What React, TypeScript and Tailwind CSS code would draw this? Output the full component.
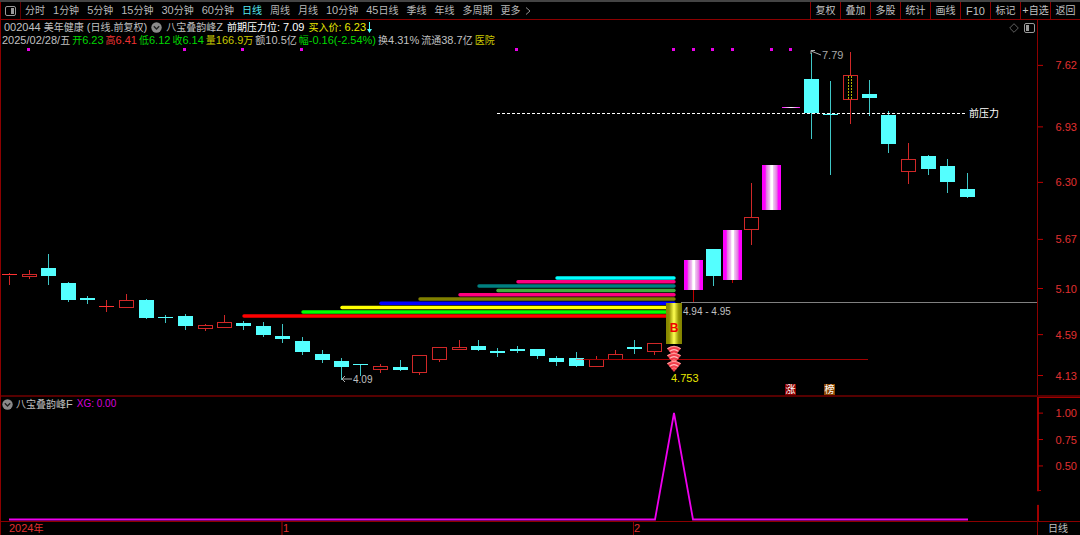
import React, { useState } from "react";

const FONT = "font-['Liberation_Sans','Noto_Sans_CJK_SC',sans-serif]";

const periods = [
  "分时", "1分钟", "5分钟", "15分钟", "30分钟", "60分钟", "日线", "周线",
  "月线", "10分钟", "45日线", "季线", "年线", "多周期",
];

const tools = ["复权", "叠加", "多股", "统计", "画线", "F10", "标记", "+自选", "返回"];

type Kind = "up" | "down" | "flatUp";

// x centre, body top, body bottom, wick top, wick bottom, kind
const candles: [number, number, number, number, number, Kind][] = [
  [9, 274, 276, 273, 285, "flatUp"],
  [29, 274, 276, 270, 279, "up"],
  [48, 268, 276, 254, 285, "down"],
  [68, 283, 300, 282, 302, "down"],
  [87, 298, 300, 296, 304, "down"],
  [106, 306, 307, 300, 312, "flatUp"],
  [126, 300, 307, 294, 307, "up"],
  [146, 300, 318, 299, 319, "down"],
  [165, 317, 318, 315, 323, "down"],
  [185, 316, 326, 314, 330, "down"],
  [205, 325, 328, 324, 331, "up"],
  [224, 322, 327, 315, 328, "up"],
  [243, 323, 326, 321, 330, "down"],
  [263, 326, 335, 322, 337, "down"],
  [282, 336, 339, 324, 343, "down"],
  [302, 341, 352, 337, 355, "down"],
  [322, 354, 360, 350, 363, "down"],
  [341, 361, 367, 358, 380, "down"],
  [360, 364, 365, 364, 376, "down"],
  [380, 366, 369, 364, 373, "up"],
  [400, 367, 370, 360, 371, "down"],
  [419, 355, 372, 355, 375, "up"],
  [439, 347, 359, 347, 362, "up"],
  [459, 347, 349, 340, 350, "up"],
  [478, 346, 350, 340, 351, "down"],
  [497, 351, 353, 348, 357, "down"],
  [517, 349, 351, 346, 353, "down"],
  [537, 349, 356, 349, 359, "down"],
  [556, 358, 362, 356, 366, "down"],
  [576, 358, 366, 352, 367, "down"],
  [596, 359, 366, 356, 366, "up"],
  [615, 354, 359, 350, 359, "up"],
  [634, 347, 349, 340, 354, "down"],
  [654, 343, 351, 343, 355, "up"],
  [713, 249, 276, 249, 286, "down"],
  [751, 217, 229, 183, 245, "up"],
  [811, 79, 113, 53, 139, "down"],
  [830, 114, 115, 81, 175, "down"],
  [850, 75, 99, 52, 124, "up"],
  [869, 94, 98, 80, 116, "down"],
  [888, 115, 144, 111, 153, "down"],
  [908, 159, 171, 143, 184, "up"],
  [928, 156, 169, 155, 175, "down"],
  [947, 166, 182, 159, 193, "down"],
  [967, 189, 197, 173, 198, "down"],
];

const peaks: [number, number, string][] = [
  [242, 316, "#ff0000"],
  [301, 312, "#00ff00"],
  [340, 307.5, "#ffff00"],
  [379, 303.2, "#0000ff"],
  [418, 299, "#808000"],
  [458, 294.8, "#ff0080"],
  [496, 290.5, "#40b040"],
  [477, 286, "#008080"],
  [516, 281.8, "#ff0080"],
  [555, 278, "#00ffff"],
];

const magentaBars: [number, number, number][] = [
  [684, 260, 290],
  [723, 230, 280],
  [762, 165, 210],
];

const signalDots = [28, 184, 242, 301, 516, 673, 693, 712, 732, 771, 790];

// Latin runs are set one size larger than the Chinese glyphs beside them.
function Label({ children }: { children: string }) {
  const runs = children.match(/[\u4e00-\u9fff]+|[^\u4e00-\u9fff]+/g) ?? [];
  return (
    <>
      {runs.map((run, i) => (
        <span key={i} className={/[\u4e00-\u9fff]/.test(run) ? "text-[10px]" : "text-[11px]"}>
          {run}
        </span>
      ))}
    </>
  );
}

function Candle({ c }: { c: [number, number, number, number, number, Kind] }) {
  const [x, top, bottom, high, low, kind] = c;
  if (kind === "down") {
    return (
      <g>
        <rect x={x} y={high} width="1" height={low - high} fill="#3fc6c6" />
        <rect x={x - 7} y={top} width="15" height={bottom - top} fill="#54ffff" />
      </g>
    );
  }
  return (
    <g>
      <rect x={x} y={high} width="1" height={top - high} fill="#d02828" />
      <rect x={x} y={bottom} width="1" height={Math.max(0, low - bottom)} fill="#d02828" />
      {kind === "up" ? (
        <rect x={x - 6.5} y={top + 0.5} width="14" height={bottom - top} fill="none" stroke="#d02828" />
      ) : (
        <rect x={x - 7} y={top} width="15" height="1" fill="#ff3232" />
      )}
    </g>
  );
}

function Gem({ y }: { y: number }) {
  return (
    <g transform={`translate(674 ${y})`}>
      <path d="M-7 2.6Q0 -2.6 7 2.6L0 11Z" fill="#f03c4a" />
      <path d="M-6.6 2.8Q0 -2 6.6 2.8" fill="none" stroke="#ff9a9a" strokeWidth="1.4" />
      <path d="M-4.4 5.4Q0 1.8 4.4 5.4" fill="none" stroke="#ffc0c0" strokeWidth="1.1" />
      <path d="M-2.4 7.8Q0 5.8 2.4 7.8" fill="none" stroke="#ff8080" />
    </g>
  );
}

function PriceChart() {
  return (
    <svg viewBox="1 45 1036 350" className="block w-full" role="img" aria-label="日线">
      <defs>
        <linearGradient id="magenta">
          <stop offset="0" stopColor="#ff00ff" />
          <stop offset="0.17" stopColor="#ff00ff" />
          <stop offset="0.22" stopColor="#e070e0" />
          <stop offset="0.42" stopColor="#f0c8f0" />
          <stop offset="0.46" stopColor="#ffffff" />
          <stop offset="0.56" stopColor="#ffffff" />
          <stop offset="0.6" stopColor="#f0c8f0" />
          <stop offset="0.8" stopColor="#e070e0" />
          <stop offset="0.84" stopColor="#ff00ff" />
          <stop offset="1" stopColor="#ff00ff" />
        </linearGradient>
        <linearGradient id="gold">
          <stop offset="0" stopColor="#858500" />
          <stop offset="0.2" stopColor="#909000" />
          <stop offset="0.5" stopColor="#ffff50" />
          <stop offset="0.8" stopColor="#909000" />
          <stop offset="1" stopColor="#808000" />
        </linearGradient>
        <linearGradient id="thin">
          <stop offset="0" stopColor="#ff00ff" />
          <stop offset="0.5" stopColor="#ffffff" />
          <stop offset="1" stopColor="#ff00ff" />
        </linearGradient>
      </defs>

      {signalDots.map((x) => (
        <rect key={x} x={x - 1} y="48" width="3" height="3" fill="#e800e8" />
      ))}

      {peaks.map(([x, y, color]) => (
        <line key={y} x1={x + 2} x2="674" y1={y} y2={y} stroke={color} strokeWidth="3.4" strokeLinecap="round" />
      ))}

      {candles.map((c) => (
        <Candle key={c[0]} c={c} />
      ))}

      <path d="M848.5 76V99M851.5 76V99" stroke="#b0b000" strokeDasharray="2 1" />
      <path d="M583 359.5H868" stroke="#a00000" />
      <path d="M576 359.5H583" stroke="#d09090" />
      <path d="M681 302.5H1037" stroke="#808080" />
      <path d="M497 113.5H967" stroke="#ffffff" strokeDasharray="3 2" />
      <rect x="782" y="107" width="18" height="1" fill="url(#thin)" />

      <path d="M693.5 290V302M732.5 280V283" stroke="#c00000" />
      {magentaBars.map(([x, top, bottom]) => (
        <rect key={x} x={x} y={top} width="19" height={bottom - top} fill="url(#magenta)" />
      ))}

      <rect x="666" y="303" width="16" height="41" fill="url(#gold)" />
      <Gem y={346} />
      <Gem y={353} />
      <Gem y={361} />

      <path d="M342 379H352M345 376L342 379L345 382" fill="none" stroke="#b0b0b0" />
      <path d="M811 51L821 55M811 54V50.5H815" fill="none" stroke="#b0b0b0" />

      <g fontSize="10" className={FONT}>
        <text x="674" y="332" fontSize="12" fontWeight="700" textAnchor="middle" fill="#f00000">B</text>
        <text x="353" y="383" fill="#c0c0c0">4.09</text>
        <text x="822" y="59" fontSize="11" fill="#a8a8a8">7.79</text>
        <text x="683" y="315" fill="#c0c0c0">4.94 - 4.95</text>
        <text x="671" y="382" fontSize="11" fill="#e8e800">4.753</text>
        <text x="969" y="117" fill="#ffffff">前压力</text>
        <rect x="785" y="384" width="11" height="11" fill="#8c0000" />
        <text x="790.5" y="393" textAnchor="middle" fill="#ffffff">涨</text>
        <rect x="824" y="384" width="11" height="11" fill="#8a4600" />
        <text x="829.5" y="393" textAnchor="middle" fill="#ffffff">榜</text>
      </g>
    </svg>
  );
}

const priceTicks: [string, string][] = [
  ["7.62", "12.1%"], ["6.93", "28.5%"], ["6.30", "43.3%"], ["5.67", "58.5%"],
  ["5.10", "71.6%"], ["4.59", "83.9%"], ["4.13", "94.8%"],
];

const signalTicks: [string, string][] = [["1.00", "13%"], ["0.75", "34.3%"], ["0.50", "55.6%"]];

function AxisLabels({ ticks }: { ticks: [string, string][] }) {
  return (
    <g className={FONT} fontSize="11">
      {ticks.map(([label, y]) => (
        <g key={label}>
          <line x1="0" x2="5" y1={y} y2={y} stroke="#c00000" />
          <text x="39" y={y} dy="4" textAnchor="end" fill="#e03030">{label}</text>
        </g>
      ))}
    </g>
  );
}

function Collapse() {
  return (
    <button type="button" aria-label="展开" className="shrink-0">
      <svg viewBox="0 0 11 11" className="block size-[11px]">
        <circle cx="5.5" cy="5.5" r="5.2" fill="#8a8a8a" />
        <path d="M2.8 4.3L5.5 7L8.2 4.3" fill="none" stroke="#202020" strokeWidth="1.4" />
      </svg>
    </button>
  );
}

function PanelIcon({ side }: { side: "left" | "right" }) {
  return (
    <svg viewBox="0 0 11 10" className="block h-[10px] w-[11px]">
      <rect x="0.5" y="0.5" width="10" height="9" rx="1.5" fill="none" stroke="#9a9a9a" />
      <rect x={side === "left" ? 2 : 6} y="2" width="3" height="6" fill="#9a9a9a" />
    </svg>
  );
}

export default function App() {
  const [period, setPeriod] = useState("日线");

  return (
    <div className={`${FONT} bg-black text-[11px] leading-3 text-[#c0c0c0]`}>
      <header className="flex h-5 items-stretch justify-between border-t-2 border-b border-t-[#444444] border-b-[#8c0000]">
        <nav className="flex items-center gap-1 whitespace-nowrap">
          <button
            type="button"
            aria-label="侧栏"
            className="flex h-full w-[21px] items-center justify-center border-x border-l-[#8c0000] border-r-[#600000]"
          >
            <PanelIcon side="right" />
          </button>
          <div className="flex items-center gap-2">
            {periods.map((p) => (
              <button
                key={p}
                type="button"
                onClick={() => setPeriod(p)}
                className={p === period ? "text-[#54e8f0]" : "text-[#b8b8b8]"}
              >
                <Label>{p}</Label>
              </button>
            ))}
            <button type="button" className="flex items-center gap-1 text-[#b8b8b8]">
              <Label>更多</Label>
              <svg viewBox="0 0 6 8" className="h-2 w-[6px]">
                <path d="M1 0.5L5 4L1 7.5" fill="none" stroke="#909090" />
              </svg>
            </button>
          </div>
        </nav>
        <div className="flex">
          {tools.map((t) => (
            <button
              key={t}
              type="button"
              className="w-[30px] border-l border-[#8c0000] text-center whitespace-nowrap text-[#c0c0c0]"
            >
              <Label>{t}</Label>
            </button>
          ))}
        </div>
      </header>

      <main className="border-l border-[#8c0000]">
        <section className="flex border-b-2 border-[#560000]">
          <div className="min-w-0 flex-1 border-r border-[#8c0000]">
            <div className="flex h-[25px] justify-between pt-px">
              <div className="whitespace-nowrap">
                <div className="flex items-center gap-1 pl-[3px]">
                  <span><Label>002044 美年健康 (日线.前复权)</Label></span>
                  <Collapse />
                  <span><Label>八宝叠韵峰Z</Label></span>
                  <span className="text-white"><Label>前期压力位: 7.09</Label></span>
                  <span className="flex items-center gap-px text-[#e8e800]">
                    <span><Label>买入价: 6.23</Label></span>
                    <svg viewBox="0 0 5 11" className="h-[11px] w-[5px]">
                      <path d="M2.5 0V8" stroke="#54ffff" />
                      <path d="M0 7H5L2.5 11Z" fill="#54ffff" />
                    </svg>
                  </span>
                </div>
                <div className="flex gap-[2px] pl-px">
                  <span><Label>2025/02/28/五</Label></span>
                  <span className="text-[#00d800]"><Label>开6.23</Label></span>
                  <span className="text-[#f03232]"><Label>高6.41</Label></span>
                  <span className="text-[#00d800]"><Label>低6.12</Label></span>
                  <span className="text-[#00d800]"><Label>收6.14</Label></span>
                  <span className="text-[#c8c800]"><Label>量166.9万</Label></span>
                  <span><Label>额10.5亿</Label></span>
                  <span className="text-[#00d800]"><Label>幅-0.16(-2.54%)</Label></span>
                  <span><Label>换4.31%</Label></span>
                  <span><Label>流通38.7亿</Label></span>
                  <span className="text-[#c8c800]"><Label>医院</Label></span>
                </div>
              </div>
              <div className="flex items-start gap-[5px] pt-[2px] pr-[2px]">
                <svg viewBox="0 0 10 10" className="size-[10px]">
                  <path d="M5 0.7L9.3 5L5 9.3L0.7 5Z" fill="none" stroke="#606060" />
                </svg>
                <PanelIcon side="left" />
              </div>
            </div>
            <PriceChart />
          </div>
          <div className="w-[42px] contain-size">
            <svg className="block h-full w-full" role="img" aria-label="价格">
              <AxisLabels ticks={priceTicks} />
            </svg>
          </div>
        </section>

        <section className="flex border-b border-[#8c0000]">
          <div className="min-w-0 flex-1">
            <div className="flex h-[14px] items-center gap-[3px] pl-px">
              <Collapse />
              <span><Label>八宝叠韵峰F</Label></span>
              <span className="pl-px text-[10px] text-[#d800d8]">XG: 0.00</span>
            </div>
            <svg viewBox="1 411 1036 110" className="block w-full" role="img" aria-label="XG">
              <path
                d="M9 519.5H655L674 413L693 519.5H968"
                fill="none"
                stroke="#ee00ee"
                strokeWidth="1.8"
              />
            </svg>
          </div>
          <div className="w-[43px] contain-size">
            <svg className="block h-full w-full" role="img" aria-label="XG">
              <rect x="0" y="0" width="2" height="76%" fill="#a00000" />
              <rect x="0" y="87%" width="2" height="13%" fill="#a00000" />
              <rect x="0" y="0" width="43" height="1" fill="#a00000" />
              <rect x="0" y="75%" width="4" height="1" fill="#a00000" />
              <g transform="translate(1 0)">
                <AxisLabels ticks={signalTicks} />
              </g>
            </svg>
          </div>
        </section>

        <footer className="flex h-[13px] text-[#e03030]">
          <div className="grid min-w-0 flex-1 grid-cols-[280fr_352fr_404fr] border-r border-[#8c0000]">
            <span className="pl-2"><Label>2024年</Label></span>
            <span className="border-l-2 border-[#560000]">1</span>
            <span className="border-l border-[#8c0000]">2</span>
          </div>
          <span className="w-[42px] pl-[10px] text-[#c0c0c0]"><Label>日线</Label></span>
        </footer>
      </main>
    </div>
  );
}
